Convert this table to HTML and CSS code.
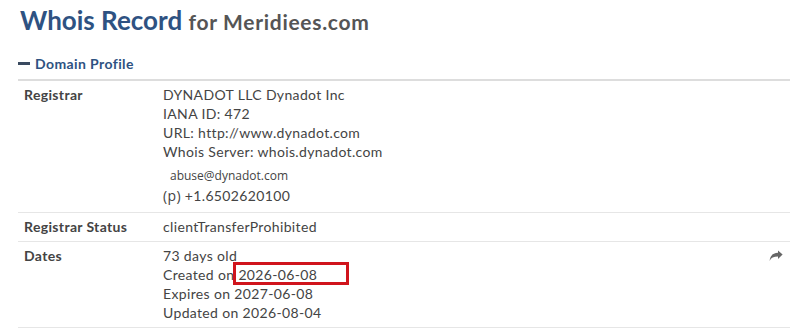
FILE: index.html
```html
<!DOCTYPE html>
<html lang="en">
<head>
  <meta charset="UTF-8" />
  <title>Whois Record for Meridiees.com</title>
  <link rel="stylesheet" href="styles.css">
</head>
<body>
  <div class="whois-page">
    <h1 class="page-title">Whois Record <small>for Meridiees.com</small></h1>

    <div class="section-head">
      <span class="toggle-dash"></span>
      Domain Profile
    </div>

    <div class="profile-table">
      <div class="profile-row">
        <div class="row-label">Registrar</div>
        <div class="row-value">
          <div>DYNADOT LLC Dynadot Inc</div>
          <div>IANA ID: 472</div>
          <div>URL: http://www.dynadot.com</div>
          <div>Whois Server: whois.dynadot.com</div>
          <div class="contact-mail">abuse@dynadot.com</div>
          <div class="contact-phone"><span class="phone-tag">(p)</span> +1.6502620100</div>
        </div>
      </div>

      <div class="profile-row">
        <div class="row-label">Registrar Status</div>
        <div class="row-value">clientTransferProhibited</div>
      </div>

      <div class="profile-row">
        <div class="row-label">Dates</div>
        <div class="row-value">
          <div>73 days old</div>
          <div>Created on <span class="highlight">2026-06-08</span></div>
          <div>Expires on 2027-06-08</div>
          <div>Updated on 2026-08-04</div>
        </div>
        <div class="row-action">
          <svg width="14" height="12" viewBox="0 0 14 12">
            <path d="M13.6 4.6 L9 0.4 V2.8 C4 3 1 5.6 0.6 11 C2 7.8 4.6 6.6 9 6.6 V9 Z" fill="#666"/>
          </svg>
        </div>
      </div>
    </div>
  </div>
</body>
</html>
```

FILE: styles.css
```css
body {
  margin: 0;
  padding: 0;
  background: #fff;
  font-family: Lato, "Open Sans", sans-serif;
  color: #444;
}

.whois-page {
  padding: 4px 10px 0 18px;
}

.page-title {
  margin: 0 0 0 2px;
  font-size: 26px;
  font-weight: bold;
  color: #2e5282;
  line-height: 32px;
}

.page-title small {
  font-size: 21px;
  letter-spacing: 0.7px;
  color: #555;
}

.section-head {
  display: flex;
  align-items: center;
  gap: 5px;
  margin-top: 17px;
  padding-bottom: 7px;
  font-size: 14px;
  font-weight: bold;
  letter-spacing: 0.4px;
  color: #2e5282;
  border-bottom: 2px solid #ddd;
}

.toggle-dash {
  display: inline-block;
  width: 12px;
  height: 3px;
  background: #3a4a60;
}

.profile-row {
  display: flex;
  padding: 4px 0 5px 6px;
  border-bottom: 1px solid #e6e6e6;
  font-size: 14px;
  line-height: 19px;
  letter-spacing: 0.35px;
}

.row-label {
  width: 139px;
  font-weight: bold;
  color: #444;
}

.row-value {
  flex: 1;
}

.contact-mail {
  margin-top: 5px;
  padding-left: 7px;
  font-family: "Open Sans", sans-serif;
  font-size: 12px;
  letter-spacing: 0;
}

.contact-phone {
  line-height: 21px;
  padding-bottom: 1px;
}

.phone-tag {
  font-family: "Open Sans", sans-serif;
}

.highlight {
  position: relative;
}

.highlight::after {
  content: "";
  position: absolute;
  left: -5px;
  top: -4px;
  bottom: -2px;
  width: 116px;
  border: 3px solid #d0141c;
  box-sizing: border-box;
}

.row-action {
  padding: 1px 7px 0 0;
}
```
